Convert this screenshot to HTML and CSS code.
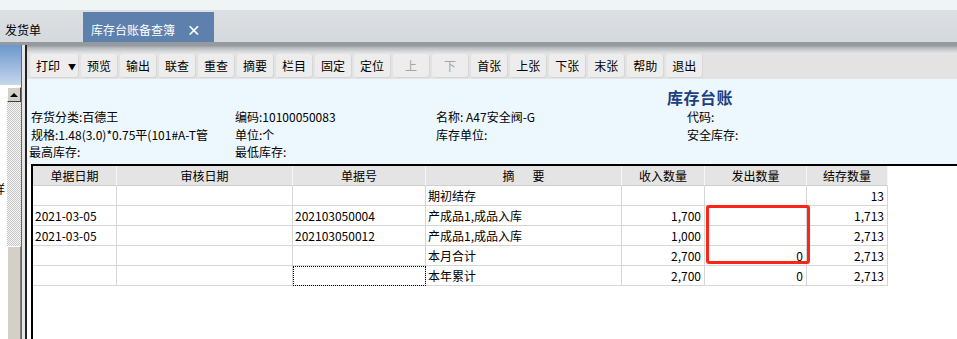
FILE: index.html
```html
<!DOCTYPE html>
<html lang="zh-CN">

<head>
    <meta charset="UTF-8">
    <title>库存台账备查簿</title>
    <link rel="stylesheet" href="styles.css">
</head>

<body>

    <!-- Tabs -->
    <div class="top-strip"></div>
    <div class="tabbar">
        <div class="tab tab-plain">发货单</div>
        <div class="tab tab-active">库存台账备查簿 <span class="tab-close">×</span></div>
    </div>

    <div class="workspace">

        <!-- Left panel -->
        <div class="sidebar">
            <div class="side-head"></div>
            <div class="side-body">
                <div class="side-text">详</div>
                <div class="scroll">
                    <div class="scroll-up"><span class="arrow"></span></div>
                    <div class="scroll-track"></div>
                    <div class="scroll-thumb"></div>
                </div>
            </div>
        </div>
        <div class="split"></div>

        <div class="main">

            <!-- Toolbar -->
            <div class="toolbar">
                <span class="btn btn-print">打印<span class="caret">▼</span></span>
                <span class="btn">预览</span>
                <span class="btn">输出</span>
                <span class="btn">联查</span>
                <span class="btn">重查</span>
                <span class="btn">摘要</span>
                <span class="btn">栏目</span>
                <span class="btn">固定</span>
                <span class="btn">定位</span>
                <span class="btn disabled">上</span>
                <span class="btn disabled">下</span>
                <span class="btn">首张</span>
                <span class="btn">上张</span>
                <span class="btn">下张</span>
                <span class="btn">末张</span>
                <span class="btn">帮助</span>
                <span class="btn">退出</span>
            </div>

            <!-- Header info -->
            <div class="info">
                <div class="info-title">库存台账</div>
                <div class="info-grid">
                    <div>存货分类:百德王</div>
                    <div>编码:10100050083</div>
                    <div>名称: A47安全阀-G</div>
                    <div>代码:</div>
                    <div>规格:1.48(3.0)*0.75平(101#A-T管</div>
                    <div>单位:个</div>
                    <div>库存单位:</div>
                    <div>安全库存:</div>
                    <div class="shift">最高库存:</div>
                    <div>最低库存:</div>
                </div>
            </div>

            <!-- Ledger grid -->
            <div class="grid-area">
                <table class="ledger">
                    <colgroup>
                        <col style="width:84px">
                        <col style="width:176px">
                        <col style="width:133px">
                        <col style="width:196px">
                        <col style="width:83px">
                        <col style="width:102px">
                        <col style="width:81px">
                    </colgroup>
                    <thead>
                        <tr>
                            <th>单据日期</th>
                            <th>审核日期</th>
                            <th>单据号</th>
                            <th>摘&emsp;&ensp;要</th>
                            <th>收入数量</th>
                            <th>发出数量</th>
                            <th>结存数量</th>
                        </tr>
                    </thead>
                    <tbody>
                        <tr>
                            <td></td>
                            <td></td>
                            <td></td>
                            <td>期初结存</td>
                            <td class="num"></td>
                            <td class="num"></td>
                            <td class="num">13</td>
                        </tr>
                        <tr>
                            <td>2021-03-05</td>
                            <td></td>
                            <td>202103050004</td>
                            <td>产成品1,成品入库</td>
                            <td class="num">1,700</td>
                            <td class="num"></td>
                            <td class="num">1,713</td>
                        </tr>
                        <tr>
                            <td>2021-03-05</td>
                            <td></td>
                            <td>202103050012</td>
                            <td>产成品1,成品入库</td>
                            <td class="num">1,000</td>
                            <td class="num"></td>
                            <td class="num">2,713</td>
                        </tr>
                        <tr>
                            <td></td>
                            <td></td>
                            <td></td>
                            <td>本月合计</td>
                            <td class="num">2,700</td>
                            <td class="num">0</td>
                            <td class="num">2,713</td>
                        </tr>
                        <tr>
                            <td></td>
                            <td></td>
                            <td class="focus"></td>
                            <td>本年累计</td>
                            <td class="num">2,700</td>
                            <td class="num">0</td>
                            <td class="num">2,713</td>
                        </tr>
                    </tbody>
                </table>
                <!-- annotation box over 发出数量 -->
                <div class="mark"></div>
            </div>

        </div>
    </div>

</body>

</html>
```

FILE: styles.css
```css
* {
    box-sizing: border-box;
}

body {
    margin: 0;
    width: 957px;
    height: 339px;
    overflow: hidden;
    font-family: "Noto Sans CJK SC", "Noto Sans", sans-serif;
    font-size: 12px;
    color: #000;
    background: #fff;
}

/* Tabs */
.top-strip {
    height: 10px;
    background: #eff4f5;
}

.tabbar {
    height: 32px;
    display: flex;
    align-items: flex-end;
    background: linear-gradient(#dde0e2, #d4d9de);
}

.tab {
    height: 30px;
    padding-top: 5px;
    line-height: 25px;
    white-space: nowrap;
}

.tab-plain {
    width: 83px;
    padding-left: 5px;
}

.tab-active {
    width: 131px;
    padding-left: 8px;
    background: #5d80ad;
    color: #fff;
}

.tab-close {
    margin-left: 9px;
    font-size: 14px;
    font-weight: bold;
}

/* Workspace */
.workspace {
    display: flex;
    height: 297px;
    border-top: 3px solid #959a9f;
}

.sidebar {
    width: 21px;
    display: flex;
    flex-direction: column;
}

.side-head {
    height: 40px;
    background: linear-gradient(#6c97cd, #c6d7ec);
}

.side-body {
    flex: 1;
    display: flex;
    background: #fff;
}

.side-text {
    width: 7px;
    overflow: hidden;
    padding-top: 98px;
    text-indent: -7px;
    line-height: 12px;
    white-space: nowrap;
}

.scroll {
    width: 14px;
    display: flex;
    flex-direction: column;
    padding-top: 2px;
}

.scroll-up {
    height: 15px;
    background: #d4d0c8;
    border: 1px solid;
    border-color: #fff #404040 #404040 #fff;
    display: flex;
    align-items: center;
    justify-content: center;
}

.arrow {
    width: 0;
    height: 0;
    border-left: 4px solid transparent;
    border-right: 4px solid transparent;
    border-bottom: 4px solid #000;
}

.scroll-track {
    height: 144px;
    background: repeating-conic-gradient(#c6c6c6 0 25%, #f6f6f6 0 50%) 0 0 / 2px 2px;
}

.scroll-thumb {
    flex: 1;
    background: #d4d0c8;
    border-top: 1px solid #fff;
    border-left: 1px solid #fff;
    border-right: 1px solid #808080;
}

.split {
    width: 6px;
    background: #e6e6e6;
    border-left: 1px solid #5a6a78;
    border-right: 2px solid #222;
}

.main {
    flex: 1;
    display: flex;
    flex-direction: column;
}

/* Toolbar */
.toolbar {
    height: 34px;
    display: flex;
    align-items: center;
    gap: 3px;
    padding: 6px 0 0 3px;
    background: linear-gradient(#8f9498 0, #b9bdc1 3px, #d3d3d3 6px, #e3e3e3 8px);
}

.btn {
    height: 23px;
    line-height: 23px;
    min-width: 36px;
    padding: 0 6px;
    text-align: center;
    background: #ededed;
    border-radius: 3px;
    box-shadow: 1px 1px 0 #d6d6d6;
    white-space: nowrap;
}

.btn-print {
    width: 48px;
    text-align: left;
}

.caret {
    margin-left: 8px;
    font-size: 8px;
    vertical-align: 1px;
}

.disabled {
    color: #a5a5a5;
}

/* Info */
.info {
    height: 85px;
    padding: 7px 0 0 4px;
    background: #edf7fe;
}

.info-title {
    padding-left: 636px;
    font-size: 16px;
    font-weight: bold;
    letter-spacing: 0.5px;
    line-height: 22px;
    color: #1c3e82;
}

.info-grid {
    display: grid;
    grid-template-columns: 204px 201px 251px auto;
    line-height: 17.5px;
    white-space: nowrap;
}

.shift {
    margin-left: -2px;
}

/* Grid */
.grid-area {
    flex: 1;
    position: relative;
    margin-left: 4px;
    border-left: 2px solid #000;
    border-top: 2px solid #000;
    background: #fff;
}

.ledger {
    width: 855px;
    table-layout: fixed;
    border-collapse: separate;
    border-spacing: 0;
}

.ledger th {
    height: 20px;
    line-height: 19px;
    padding: 0;
    font-weight: normal;
    background: #e4e4e4;
    border-right: 1px solid #f7f7f7;
    border-bottom: 1px solid #cfcfcf;
}

.ledger td {
    height: 20px;
    line-height: 19px;
    padding: 0 2px;
    white-space: nowrap;
    overflow: hidden;
    border-right: 1px solid #d6d6d6;
    border-bottom: 1px solid #d6d6d6;
}

.ledger td.num {
    text-align: right;
    padding-right: 3px;
}

.ledger td.focus {
    outline: 1px dotted #000;
    outline-offset: -1px;
}

.mark {
    position: absolute;
    left: 673px;
    top: 39px;
    width: 104px;
    height: 59px;
    border: 3px solid #ff2418;
    border-radius: 3px;
}
```
